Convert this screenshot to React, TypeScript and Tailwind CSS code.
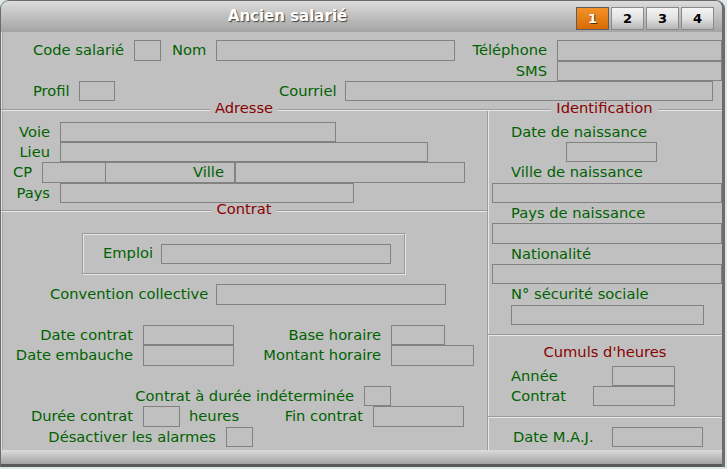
import React from 'react';

const lbl = 'text-[#006200] whitespace-nowrap';

function Box({ c }: { c: string }) {
  return <div className={`h-full shrink-0 border border-[#828282] ${c}`} />;
}

function Sep({ title }: { title: string }) {
  return (
    <div className="flex h-[14px] items-center">
      <div className="flex-1 border-t border-b border-t-[#9c9c9c] border-b-[#e8e8e8]" />
      <span className="mb-[4px] px-[5px] leading-[14px] text-[#8a0000] whitespace-nowrap">{title}</span>
      <div className="flex-1 border-t border-b border-t-[#9c9c9c] border-b-[#e8e8e8]" />
    </div>
  );
}

function Line({ c }: { c: string }) {
  return <div className={`border-t border-b border-t-[#9c9c9c] border-b-[#e8e8e8] ${c}`} />;
}

function Tab({ n, active }: { n: string; active?: boolean }) {
  return (
    <div
      className={
        active
          ? 'flex h-[23px] w-[33px] items-center justify-center border border-[#5c5c5c] bg-linear-to-b from-[#f39228] to-[#d86a00] text-[13px] font-bold text-white [text-shadow:1px_1px_0_#5a3000]'
          : 'flex h-[23px] w-[33px] items-center justify-center border border-[#8a8a8a] bg-linear-to-b from-[#f4f4f4] via-[#e2e2e2] to-[#b6b6b6] text-[13px] font-bold text-black'
      }
    >
      {n}
    </div>
  );
}

export default function App() {
  return (
    <div className="h-[469px] w-[727px] bg-[#dce8e8] font-['DejaVu_Sans',Verdana,sans-serif] text-[14.7px] leading-none">
      <div className="flex h-[467px] w-[725px] flex-col overflow-hidden rounded-t-[9px] border-t border-r-[3px] border-l border-[#6c6c6c] bg-[#c0c0c0]">
        {/* Title bar */}
        <div className="flex h-[31px] shrink-0 items-start bg-linear-to-b from-[#dcdcdc] to-[#a4a4a4]">
          <div className="flex h-full flex-1 items-center justify-center pb-[1px] pr-[2px] text-[15px] font-bold text-white [text-shadow:1px_1px_1px_#404040]">
            Ancien salarié
          </div>
          <div className="flex gap-[2px] pt-[6px] pr-[8px]">
            <Tab n="1" active />
            <Tab n="2" />
            <Tab n="3" />
            <Tab n="4" />
          </div>
        </div>

        {/* Body */}
        <div className="flex flex-1 flex-col shadow-[inset_1px_0_0_#e2e2e2,inset_2px_0_0_#a6a6a6]">
          {/* Top fields */}
          <div className="mt-[8px] flex h-[21px] items-center pl-[32px]">
            <span className={`${lbl} w-[101px]`}>Code salarié</span>
            <Box c="w-[27px]" />
            <span className={`${lbl} w-[55px] pl-[11px]`}>Nom</span>
            <Box c="w-[239px]" />
            <span className={`${lbl} w-[102px] pr-[10px] text-right`}>Téléphone</span>
            <Box c="w-[165px]" />
          </div>
          <div className="flex h-[20px] items-center pl-[454px]">
            <span className={`${lbl} w-[102px] pr-[10px] text-right`}>SMS</span>
            <Box c="w-[165px]" />
          </div>
          <div className="flex h-[20px] items-center pl-[32px]">
            <span className={`${lbl} w-[46px]`}>Profil</span>
            <Box c="w-[36px]" />
            <span className="w-[164px]" />
            <span className={`${lbl} w-[66px]`}>Courriel</span>
            <Box c="w-[368px]" />
          </div>

          <div className="mt-[2px] flex flex-1">
            {/* Left column */}
            <div className="flex w-[486px] flex-col">
              <Sep title="Adresse" />
              <div className="mt-[5px] flex h-[20px] items-center">
                <span className={`${lbl} w-[49px] text-right`}>Voie</span>
                <Box c="ml-[10px] w-[276px]" />
              </div>
              <div className="flex h-[20px] items-center">
                <span className={`${lbl} w-[49px] text-right`}>Lieu</span>
                <Box c="ml-[10px] w-[368px]" />
              </div>
              <div className="flex h-[21px] items-center">
                <span className={`${lbl} w-[41px] pl-[12px]`}>CP</span>
                <Box c="w-[64px]" />
                <div className="flex h-full w-[129px] items-center justify-end border border-l-0 border-[#828282] pr-[10px]">
                  <span className={lbl}>Ville</span>
                </div>
                <Box c="w-[230px]" />
              </div>
              <div className="flex h-[20px] items-center">
                <span className={`${lbl} w-[49px] text-right`}>Pays</span>
                <Box c="ml-[10px] w-[294px]" />
              </div>

              <div className="mt-[1px]">
                <Sep title="Contrat" />
              </div>
              <div className="mt-[15px] ml-[81px] flex h-[41px] w-[323px] items-center border border-[#9a9a9a] shadow-[1px_1px_0_#e6e6e6,inset_1px_1px_0_#e6e6e6]">
                <span className={`${lbl} w-[78px] pl-[20px]`}>Emploi</span>
                <div className="h-[20px] w-[230px] border border-[#828282]" />
              </div>
              <div className="mt-[10px] flex h-[21px] items-center pl-[49px]">
                <span className={`${lbl} w-[166px]`}>Convention collective</span>
                <Box c="w-[230px]" />
              </div>

              <div className="mt-[20px] flex h-[20px] items-center">
                <span className={`${lbl} w-[132px] text-right`}>Date contrat</span>
                <Box c="ml-[10px] w-[91px]" />
                <span className={`${lbl} w-[147px] text-right`}>Base horaire</span>
                <Box c="ml-[10px] w-[54px]" />
              </div>
              <div className="flex h-[21px] items-center">
                <span className={`${lbl} w-[132px] text-right`}>Date embauche</span>
                <Box c="ml-[10px] w-[91px]" />
                <span className={`${lbl} w-[147px] text-right`}>Montant horaire</span>
                <Box c="ml-[10px] w-[83px]" />
              </div>

              <div className="mt-[20px] flex h-[20px] items-center">
                <span className={`${lbl} w-[353px] text-right`}>Contrat à durée indéterminée</span>
                <Box c="ml-[10px] w-[27px]" />
              </div>
              <div className="flex h-[21px] items-center">
                <span className={`${lbl} w-[132px] text-right`}>Durée contrat</span>
                <Box c="ml-[10px] w-[37px]" />
                <span className={`${lbl} w-[60px] pl-[9px]`}>heures</span>
                <span className={`${lbl} w-[123px] text-right`}>Fin contrat</span>
                <Box c="ml-[10px] w-[91px]" />
              </div>
              <div className="flex h-[20px] items-center">
                <span className={`${lbl} w-[215px] text-right`}>Désactiver les alarmes</span>
                <Box c="ml-[10px] w-[27px]" />
              </div>
            </div>

            {/* Right column */}
            <div className="flex flex-1 flex-col">
              <Sep title="Identification" />
              <div className="-mt-[6px] flex flex-1 flex-col border-l border-[#9c9c9c] pt-[6px] shadow-[inset_1px_0_0_#e8e8e8]">
                <div className={`mt-[5px] flex h-[20px] items-center pl-[23px] ${lbl}`}>Date de naissance</div>
                <div className="flex h-[20px] pl-[78px]">
                  <Box c="w-[91px]" />
                </div>
                <div className={`flex h-[21px] items-center pl-[23px] ${lbl}`}>Ville de naissance</div>
                <div className="flex h-[20px] pl-[4px]">
                  <Box c="w-[230px]" />
                </div>
                <div className={`flex h-[20px] items-center pl-[23px] ${lbl}`}>Pays de naissance</div>
                <div className="flex h-[21px] pl-[4px]">
                  <Box c="w-[230px]" />
                </div>
                <div className={`flex h-[20px] items-center pl-[23px] ${lbl}`}>Nationalité</div>
                <div className="flex h-[20px] pl-[4px]">
                  <Box c="w-[230px]" />
                </div>
                <div className={`flex h-[21px] items-center pl-[23px] ${lbl}`}>N° sécurité sociale</div>
                <div className="flex h-[20px] pl-[23px]">
                  <Box c="w-[193px]" />
                </div>

                <Line c="mt-[9px]" />
                <div className="mt-[6px] flex h-[20px] items-center justify-center text-[#8a0000]">Cumuls d'heures</div>
                <div className="mt-[4px] flex h-[20px] items-center pl-[23px]">
                  <span className={`${lbl} w-[101px]`}>Année</span>
                  <Box c="w-[63px]" />
                </div>
                <div className="flex h-[20px] items-center pl-[23px]">
                  <span className={`${lbl} w-[82px]`}>Contrat</span>
                  <Box c="w-[82px]" />
                </div>

                <Line c="mt-[10px]" />
                <div className="mt-[9px] flex h-[20px] items-center pl-[25px]">
                  <span className={`${lbl} w-[99px]`}>Date M.A.J.</span>
                  <Box c="w-[91px]" />
                </div>
              </div>
            </div>
          </div>
        </div>

        {/* Bottom bar */}
        <div className="h-[17px] shrink-0 border-b-[3px] border-[#5a5a5a] bg-linear-to-b from-[#dcdcdc] to-[#a2a2a2]" />
      </div>
    </div>
  );
}
